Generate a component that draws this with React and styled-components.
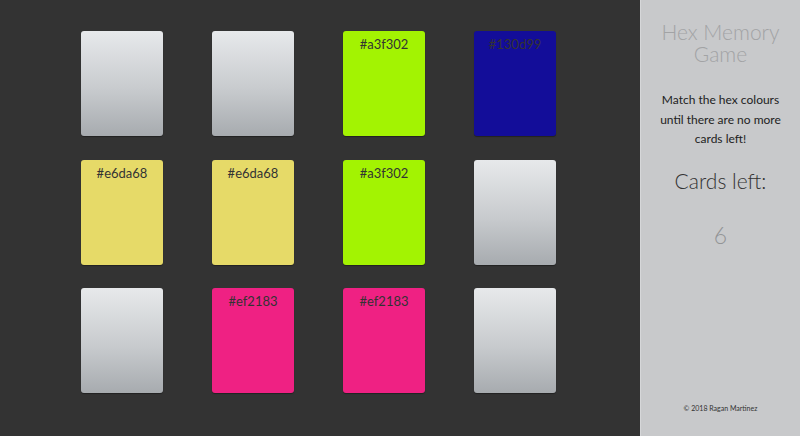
import styled, { createGlobalStyle } from "styled-components";

const GlobalStyle = createGlobalStyle`
  html, body {
    margin: 0;
    padding: 0;
    height: 100%;
    background: #333333;
  }
  #root {
    height: 100%;
  }
`;

const StyledPage = styled.div`
  display: flex;
  width: 800px;
  height: 436px;
  font-family: Lato, "Liberation Sans", sans-serif;
  overflow: hidden;
`;

const StyledBoard = styled.main`
  flex: 1;
  background: #333333;
  display: grid;
  grid-template-columns: repeat(4, 82px);
  grid-auto-rows: 105px;
  column-gap: 49px;
  row-gap: 23.5px;
  justify-content: start;
  align-content: start;
  padding: 31px 0 0 81px;
`;

const StyledCard = styled.div`
  border-radius: 3px;
  background: ${({ $color }) =>
    $color || "linear-gradient(to bottom, #e7e9eb 0%, #c8cbce 55%, #a7abaf 100%)"};
  box-shadow: 0 1px 1px rgba(0, 0, 0, 0.35);
  color: #333333;
  font-size: 13px;
  text-align: center;
  padding-top: 5px;
  box-sizing: border-box;
`;

const StyledSidebar = styled.aside`
  width: 160px;
  background: #c8c9cb;
  border-left: 1px solid #d6d7d9;
  box-sizing: border-box;
  display: flex;
  flex-direction: column;
  align-items: center;
  text-align: center;
  padding: 21px 8px 0;
`;

const StyledTitle = styled.h1`
  margin: 0;
  font-weight: 300;
  font-size: 21px;
  line-height: 22px;
  color: #a2a3a5;
`;

const StyledIntro = styled.p`
  margin: 25px 0 0;
  font-size: 12px;
  line-height: 19.5px;
  color: #222222;
`;

const StyledCountLabel = styled.h2`
  margin: 19px 0 0;
  font-weight: 300;
  font-size: 21px;
  line-height: 26px;
  color: #333333;
`;

const StyledCount = styled.div`
  margin-top: 28px;
  font-weight: 300;
  font-size: 23px;
  line-height: 26px;
  color: #939496;
`;

const StyledFooter = styled.footer`
  margin-top: auto;
  margin-bottom: 24px;
  font-size: 7px;
  color: #333333;
`;

const cards = [
  null,
  null,
  "#a3f302",
  "#130d99",
  "#e6da68",
  "#e6da68",
  "#a3f302",
  null,
  null,
  "#ef2183",
  "#ef2183",
  null,
];

export default function App() {
  return (
    <>
      <GlobalStyle />
      <StyledPage>
        <StyledBoard>
          {cards.map((color, i) => (
            <StyledCard key={i} $color={color}>
              {color}
            </StyledCard>
          ))}
        </StyledBoard>
        <StyledSidebar>
          <StyledTitle>Hex Memory Game</StyledTitle>
          <StyledIntro>
            Match the hex colours until there are no more cards left!
          </StyledIntro>
          <StyledCountLabel>Cards left:</StyledCountLabel>
          <StyledCount>6</StyledCount>
          <StyledFooter>© 2018 Ragan Martinez</StyledFooter>
        </StyledSidebar>
      </StyledPage>
    </>
  );
}
